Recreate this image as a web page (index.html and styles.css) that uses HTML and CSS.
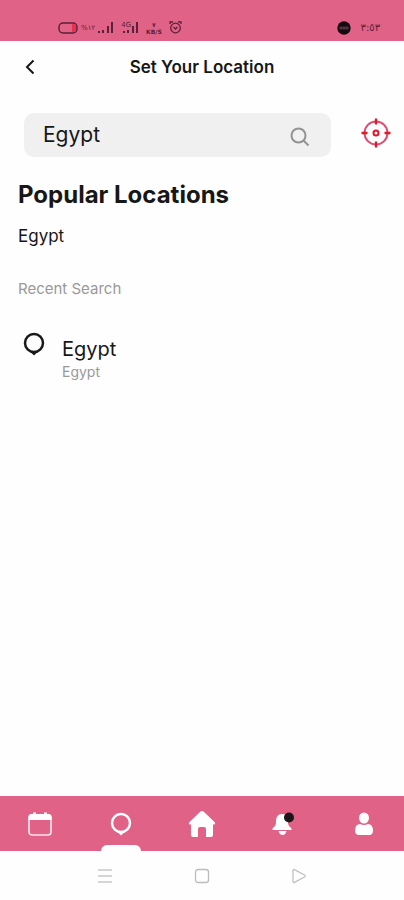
FILE: index.html
```
<!DOCTYPE html>
<html lang="en">
<head>
<meta charset="utf-8">
<meta name="viewport" content="width=device-width, initial-scale=1">
<title>Set Your Location</title>
<link rel="stylesheet" href="styles.css">
</head>
<body>
<div class="app">
  <div class="status">
    <div class="status-group">
      <svg width="20" height="12" viewBox="0 0 20 12" fill="none"><path d="M14 2v8c3 0 4-1 4-3V5c0-2-1-3-4-3z" fill="#e9304e"/><rect x="1" y="1" width="18" height="10" rx="4" stroke="#5c2139" stroke-width="1.5"/></svg>
      <span class="tiny">%١٢</span>
      <svg width="16" height="14" viewBox="0 0 16 14" fill="#5c2139"><path d="M0 10h2v2H0zM4 9h2v3H4zM9 5h2v7H9zM13 1h2v11h-2z"/></svg>
      <div class="network">
        <span class="tiny">4G</span>
        <svg width="16" height="14" viewBox="0 0 16 14" fill="#5c2139"><path d="M0 10h2v2H0zM4 9h2v3H4zM9 5h2v7H9zM13 1h2v11h-2z"/></svg>
      </div>
      <div class="speed"><span>٧</span><span>KB/S</span></div>
      <svg width="13" height="13" viewBox="0 0 13 13" fill="none" stroke="#5c2139" stroke-width="1.3"><circle cx="6.5" cy="7" r="4.8"/><path d="M1 3V1h3M12 3V1H9M4.5 6l2 2 2-2"/></svg>
    </div>
    <div class="status-group">
      <svg width="14" height="14" viewBox="0 0 14 14"><circle cx="7" cy="7" r="6.7" fill="#16090f"/><path d="M3 6h2v2H3zM6 6h2v2H6zM9 6h2v2H9z" fill="none" stroke="#785262" stroke-width=".7"/></svg>
      <span class="clock">٣:٥٣</span>
    </div>
  </div>
  <header class="top">
    <button class="icon-button" type="button" aria-label="Back">
      <svg width="10" height="16" viewBox="0 0 10 16" fill="none" stroke="#171717" stroke-width="2"><path d="M8.500 1.500 2 8l6.500 6.500"/></svg>
    </button>
    <h1>Set Your Location</h1>
  </header>
  <main>
    <form class="search-row">
      <div class="search">
        <input type="text" value="Egypt" aria-label="Location">
        <button class="icon-button" type="submit" aria-label="Search">
          <svg width="20" height="20" viewBox="0 0 20 20" fill="none" stroke="#929292" stroke-width="2"><circle cx="8.500" cy="8.500" r="7"/><path d="m13.500 13.500 5 5"/></svg>
        </button>
      </div>
      <button class="icon-button" type="button" aria-label="Use current location">
        <svg width="30" height="30" viewBox="0 0 30 30" fill="none"><circle cx="15" cy="15" r="11.500" stroke="#dd4d72" stroke-width="2"/><path d="M15 .5v6M15 23.500v6M.5 15h6M23.500 15h6" stroke="#dc1b28" stroke-width="2.300"/><circle cx="15" cy="15" r="2.500" stroke="#e0142a" stroke-width="2"/></svg>
      </button>
    </form>
    <h2>Popular Locations</h2>
    <a class="popular" href="#egypt">Egypt</a>
    <h3>Recent Search</h3>
    <a class="recent" href="#recent">
      <svg width="22" height="24" viewBox="0 0 22 24"><circle cx="11" cy="11" r="9" fill="none" stroke="#191919" stroke-width="2.500"/><path d="M6.500 19h9L11 23.500z" fill="#191919"/></svg>
      <span class="place"><span class="place-name">Egypt</span><span class="place-country">Egypt</span></span>
    </a>
  </main>
  <nav class="tabs">
    <a href="#calendar" aria-label="Calendar">
      <svg width="26" height="26" viewBox="0 0 26 26"><rect x="2" y="4" width="22" height="20" rx="3" fill="none" stroke="#fbdfe8" stroke-width="1.700"/><path d="M1.500 9V6q0-3 3-3H6V1.500h3V3h8V1.500h3V3h1.500q3 0 3 3v3z" fill="#fff"/></svg>
    </a>
    <a class="active" href="#location" aria-label="Location">
      <svg width="22" height="24" viewBox="0 0 22 24"><circle cx="11" cy="11" r="9" fill="none" stroke="#fff" stroke-width="2.500"/><path d="M6.500 19h9L11 23.500z" fill="#fff"/></svg>
    </a>
    <a href="#home" aria-label="Home">
      <svg width="28" height="28" viewBox="0 0 28 28"><path d="M14 1q1 0 2 1l10.500 10q1.500 2-.5 2.500H25V25q0 2-2 2h-5v-8q0-2-2-2h-4q-2 0-2 2v8H5q-2 0-2-2V14.500H2q-2-.5-.5-2.500L12 2q1-1 2-1z" fill="#fff"/></svg>
    </a>
    <a href="#notifications" aria-label="Notifications">
      <svg width="26" height="26" viewBox="0 0 26 26"><path d="M12 3c-5 0-6 4-6 8 0 3-1 4-3 6-1 1-1 2 .5 2h17c1.500 0 1.500-1 .5-2-2-2-3-3-3-6 0-5-1-8-6-8z" fill="#fff"/><path d="M8.500 20h8q-1 4-4 4t-4-4z" fill="#fff"/><circle cx="19" cy="6.500" r="5" fill="#1d1519"/></svg>
    </a>
    <a href="#profile" aria-label="Profile">
      <svg width="20" height="26" viewBox="0 0 20 26" fill="#fff"><ellipse cx="10" cy="7" rx="5" ry="5.500"/><path d="M6 13q4 2 8 0 4.500 0 5 6 .3 5-4 5H5q-4.300 0-4-5 .5-6 5-6z"/></svg>
    </a>
  </nav>
  <div class="system">
    <button class="icon-button" type="button" aria-label="Menu"><svg width="16" height="16" viewBox="0 0 16 16" stroke="#c8c8c8" stroke-width="1.500"><path d="M1 2h14M1 8h14M1 14h14"/></svg></button>
    <button class="icon-button" type="button" aria-label="Overview"><svg width="16" height="16" viewBox="0 0 16 16" fill="none" stroke="#bcbcbc" stroke-width="1.300"><rect x="1.500" y="1.500" width="13" height="13" rx="2.500"/></svg></button>
    <button class="icon-button" type="button" aria-label="System back"><svg width="16" height="16" viewBox="0 0 16 16" fill="none" stroke="#c0c0c0" stroke-width="1.300" stroke-linejoin="round"><path d="M3.500 1.600 13.500 7q1.500 1 0 2L3.500 14.400Q2 15 2 13.500v-11Q2 1 3.500 1.600z"/></svg></button>
  </div>
</div>
</body>
</html>
```
FILE: styles.css
```
* {
  box-sizing: border-box;
}

body {
  margin: 0;
  background: #fefefe;
  color: #171717;
  font-family: Inter, "Liberation Sans", sans-serif;
}

svg {
  display: block;
}

a {
  color: inherit;
  text-decoration: none;
}

h1,
h2,
h3 {
  margin: 0;
}

.app {
  display: flex;
  flex-direction: column;
  min-height: 100vh;
}

.status {
  display: flex;
  justify-content: space-between;
  align-items: center;
  padding: 14px 24px 0 58px;
  height: 41px;
  background: #e06287;
  color: #5c2139;
}

.status-group {
  display: flex;
  align-items: center;
  gap: 3px;
}

.status-group:last-child {
  gap: 10px;
}

.tiny {
  font: 7px/8px "DejaVu Sans", sans-serif;
}

.network {
  display: flex;
  align-items: center;
  margin-left: 4px;
}

.network .tiny {
  align-self: flex-start;
  margin-right: -8px;
}

.speed {
  display: flex;
  flex-direction: column;
  align-items: center;
  margin: 0 4px;
  font: bold 6px/7px "DejaVu Sans", sans-serif;
}

.clock {
  font: 10px/12px "DejaVu Sans", sans-serif;
}

.icon-button {
  display: grid;
  place-items: center;
  padding: 0;
  border: 0;
  background: none;
}

.top {
  display: grid;
  grid-template-columns: 40px 1fr 40px;
  align-items: center;
  height: 52px;
  padding: 0 6px;
}

.top .icon-button {
  height: 40px;
  padding-left: 8px;
}

h1 {
  font-size: 17px;
  line-height: 24px;
  font-weight: 600;
  text-align: center;
}

main {
  display: flex;
  flex: 1;
  flex-direction: column;
  align-items: flex-start;
  padding: 20px 13px 0 18px;
}

.search-row {
  display: flex;
  align-items: flex-start;
  align-self: stretch;
  gap: 30px;
  padding-left: 6px;
}

.search-row > .icon-button {
  height: 40px;
}

.search {
  display: flex;
  flex: 1;
  align-items: center;
  min-width: 0;
  height: 44px;
  padding: 0 21px 0 19px;
  border-radius: 10px;
  background: #f0f0f0;
}

.search input {
  flex: 1;
  min-width: 0;
  padding: 0;
  border: 0;
  outline: 0;
  background: none;
  color: #171717;
  font: 21px/28px Inter, "Liberation Sans", sans-serif;
}

.search .icon-button {
  padding-top: 4px;
}

h2 {
  margin-top: 22px;
  font-size: 24px;
  line-height: 32px;
  font-weight: 700;
}

.popular {
  margin-top: 13px;
  font-size: 17px;
  line-height: 24px;
}

h3 {
  margin-top: 29px;
  color: #999;
  font-size: 15px;
  line-height: 24px;
  font-weight: 400;
}

.recent {
  display: flex;
  gap: 17px;
  margin-top: 31px;
  padding-left: 5px;
}

.place {
  display: flex;
  flex-direction: column;
  padding-top: 3px;
}

.place-name {
  font-size: 20px;
  line-height: 28px;
}

.place-country {
  color: #999;
  font-size: 14px;
  line-height: 18px;
}

.tabs {
  display: grid;
  grid-template-columns: repeat(5, 1fr);
  height: 55px;
  background: #e06287;
}

.tabs a {
  position: relative;
  display: grid;
  place-items: center;
}

.active::after {
  content: "";
  position: absolute;
  bottom: 0;
  left: calc(50% - 20px);
  width: 40px;
  height: 6px;
  border-radius: 6px 6px 0 0;
  background: #fefefe;
}

.system {
  display: flex;
  justify-content: center;
  align-items: center;
  gap: 81px;
  height: 49px;
}
```
